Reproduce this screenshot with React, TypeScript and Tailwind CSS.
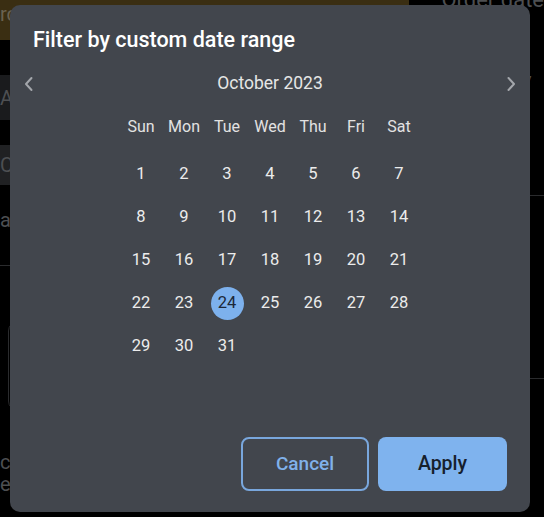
const WEEKDAYS = ['Sun', 'Mon', 'Tue', 'Wed', 'Thu', 'Fri', 'Sat'];
const SELECTED_DAY = 24;

function Chevron({ dir }: { dir: 'left' | 'right' }) {
  return (
    <svg width="12" height="18" viewBox="0 0 12 18" fill="none" stroke="#a3a6ab" strokeWidth="2" strokeLinecap="round" strokeLinejoin="round">
      {dir === 'left' ? <polyline points="8.5,3 3,9 8.5,15" /> : <polyline points="3.5,3 9,9 3.5,15" />}
    </svg>
  );
}

function Backdrop() {
  return (
    <div className="absolute inset-0 flex text-[#4d4f52] text-[20px] whitespace-nowrap">
      <div className="w-[430px] flex flex-col">
        <div className="h-[40px] bg-[#3a2e12] text-[#6a6250] pt-[2px] leading-[24px]">rc</div>
        <div className="mt-[35px] h-[45px] bg-[#1a1b1d] flex items-center">Ac</div>
        <div className="mt-[25px] h-[40px] bg-[#202123] flex items-center">C</div>
        <div className="mt-[20px] h-[30px] flex items-center">a</div>
        <div className="mt-[30px] border-t border-[#2a2b2d]" />
        <div className="mt-[55px] ml-[8px] h-[90px] w-[60px] border border-[#2a2b2d] rounded-[10px]" />
        <div className="mt-[40px] leading-[22px]">ch<br />e</div>
      </div>
      <div className="flex-1 flex flex-col pl-[32px]">
        <div className="-mt-[12px] h-[30px] leading-[24px] text-[22px]">Order date</div>
        <div className="mt-[47px] h-[24px] pl-[70px]">ay</div>
        <div className="mt-[46px] h-[24px] pl-[70px]">or</div>
        <div className="mt-[36px] border-t border-[#2a2b2d]" />
        <div className="mt-[28px] h-[24px] pl-[70px]">tu</div>
        <div className="mt-[70px] h-[24px] pl-[70px]">ot</div>
        <div className="mt-[36px] border-t border-[#2a2b2d]" />
        <div className="mt-[52px] h-[24px] pl-[70px]">el</div>
      </div>
    </div>
  );
}

export default function App() {
  const days: number[] = Array.from({ length: 31 }, (_, i) => i + 1);

  return (
    <div className="relative w-[544px] h-[517px] bg-black overflow-hidden font-['Roboto',sans-serif]">
      <Backdrop />

      <div className="absolute left-[10px] top-[5px] w-[520px] h-[507px] rounded-[10px] bg-[#42464d] flex flex-col">
        <div className="px-[23px] pt-[22px] text-[21.5px] leading-[26px] font-medium text-white">
          Filter by custom date range
        </div>

        <div className="mt-[9px] h-[43px] flex items-center justify-between px-[13px]">
          <Chevron dir="left" />
          <span className="text-[17.5px] text-[#e6e6e6]">October 2023</span>
          <Chevron dir="right" />
        </div>

        <div className="mx-auto w-[301px]">
          <div className="grid grid-cols-7">
            {WEEKDAYS.map((d) => (
              <div key={d} className="h-[43px] flex items-center justify-center text-[16px] text-[#e2e2e2]">
                {d}
              </div>
            ))}
          </div>
          <div className="mt-[5px] grid grid-cols-7">
            {days.map((d) => (
              <div key={d} className="h-[43px] flex items-center justify-center">
                {d === SELECTED_DAY ? (
                  <span className="w-[33px] h-[33px] rounded-full bg-[#7db1ed] text-[#1c2838] text-[16.5px] flex items-center justify-center">
                    {d}
                  </span>
                ) : (
                  <span className="text-[16.5px] text-[#ececec]">{d}</span>
                )}
              </div>
            ))}
          </div>
        </div>

        <div className="mt-auto flex justify-end gap-[9px] px-[23px] pb-[21px]">
          <button className="w-[128px] h-[54px] rounded-[8px] border-2 border-[#79a7dd] text-[#80b1ea] text-[19px] font-medium">
            Cancel
          </button>
          <button className="w-[129px] h-[54px] rounded-[8px] bg-[#7fb3ee] text-[#16202c] text-[19.5px] font-medium">
            Apply
          </button>
        </div>
      </div>
    </div>
  );
}
